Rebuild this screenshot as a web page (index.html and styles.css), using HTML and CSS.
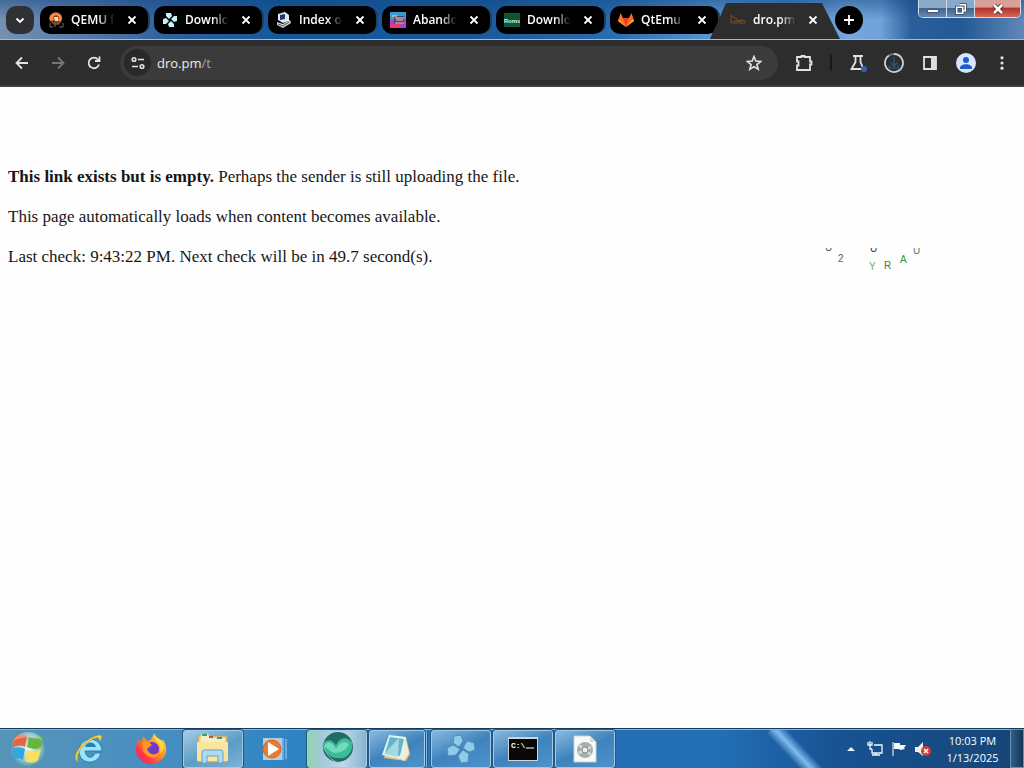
FILE: index.html
```html
<!DOCTYPE html>
<html lang="en">
<head>
<meta charset="utf-8">
<title>dro.pm</title>
<link rel="stylesheet" href="styles.css">
</head>
<body>
<header class="tabstrip">
  <button class="round search" aria-label="Search tabs"><svg width="12" height="12" viewBox="0 0 12 12"><path d="M2.500 4.500 6 8l3.500-3.500" fill="none" stroke="#fff" stroke-width="1.800"/></svg></button>
  <nav class="tabs" aria-label="Tabs">
    <div class="tab">
      <svg width="16" height="16" viewBox="0 0 16 16"><circle cx="8" cy="6.500" r="6.500" fill="#7b3a20"/><path d="M2 9C0 4 4 0 9 1c5 1 6 6 3 9l-2-2 1-3-3-2-3 2 1 3z" fill="#ef8d50"/><path d="M6 5h4v4H7z" fill="#ffd7a5"/><path d="M2 11v4h3m6 0h4v-4M7 11v4M10 10v3" fill="none" stroke="#777069"/></svg>
      <a href="#" class="title">QEMU f</a><button class="close" aria-label="Close QEMU"><svg width="10" height="10" viewBox="0 0 10 10"><path d="m1.500 1.500 7 7m0-7-7 7"/></svg></button>
    </div>
    <div class="tab">
      <svg width="16" height="16" viewBox="0 0 16 16"><g fill="#c7f1fb"><path d="M4 1h5l1 3-3 3-3-3z"/><path d="M15 4v5l-3 1-3-3 3-3z"/><path d="M12 15H7l-1-3 3-3 3 3z"/><path d="M1 12V7l3-1 3 3-3 3z"/></g></svg>
      <a href="#" class="title">Downlo</a><button class="close" aria-label="Close Downloads"><svg width="10" height="10" viewBox="0 0 10 10"><path d="m1.500 1.500 7 7m0-7-7 7"/></svg></button>
    </div>
    <div class="tab">
      <svg width="16" height="16" viewBox="0 0 16 16"><path d="m2 2 7-2 4 3v6l-6 2-5-3z" fill="#e6e7f0"/><path d="m4 3 5-1v5L4 8z" fill="#233574"/><path d="m1 10 6 2 7-4 1 3-8 5-6-3z" fill="#d4d5dc"/><path d="m2 12 5 2 6-4" fill="none" stroke="#555"/></svg>
      <a href="#" class="title">Index of</a><button class="close" aria-label="Close Index"><svg width="10" height="10" viewBox="0 0 10 10"><path d="m1.500 1.500 7 7m0-7-7 7"/></svg></button>
    </div>
    <div class="tab">
      <svg width="16" height="16" viewBox="0 0 16 16"><path d="M0 0h16v16H0z" fill="#3a9ad0"/><path d="M0 8h16v8H0z" fill="#b140c5"/><path d="M0 12h9v4H0z" fill="#ed367d"/><path d="M4 4h10v8H4z" fill="#493c92"/><path d="M2 4h5M5 6h9M6 8h7M5 11h9" stroke="#ffe278" stroke-width="1.200"/></svg>
      <a href="#" class="title">Abando</a><button class="close" aria-label="Close Abandonware"><svg width="10" height="10" viewBox="0 0 10 10"><path d="m1.500 1.500 7 7m0-7-7 7"/></svg></button>
    </div>
    <div class="tab">
      <svg width="16" height="16" viewBox="0 0 16 16"><path d="M0 1h16v14H0z" fill="#0c5636"/><text x="8" y="11" text-anchor="middle" class="roms">Roms</text></svg>
      <a href="#" class="title">Downlo</a><button class="close" aria-label="Close Downloads"><svg width="10" height="10" viewBox="0 0 10 10"><path d="m1.500 1.500 7 7m0-7-7 7"/></svg></button>
    </div>
    <div class="tab">
      <svg width="16" height="16" viewBox="0 0 16 16"><path d="M8 15 0 9l2.500-8L5 6h6l2.500-5L16 9z" fill="#fc6d26"/><path d="M8 15 5 6h6z" fill="#e24329"/><path d="M8 15 0 9l1-2z" fill="#fca326"/><path d="m8 15 8-6-1-2z" fill="#fca326"/></svg>
      <a href="#" class="title">QtEmu</a><button class="close" aria-label="Close QtEmu"><svg width="10" height="10" viewBox="0 0 10 10"><path d="m1.500 1.500 7 7m0-7-7 7"/></svg></button>
    </div>
    <div class="tab active">
      <svg width="16" height="16" viewBox="0 0 16 16"><path d="M1 3v8h14V9l-4-1-3 1-2-3H4L1 3M3 9h9" fill="none" stroke="#77532b"/></svg>
      <a href="#" class="title">dro.pm/</a><button class="close" aria-label="Close dro.pm"><svg width="10" height="10" viewBox="0 0 10 10"><path d="m1.500 1.500 7 7m0-7-7 7"/></svg></button>
    </div>
  </nav>
  <button class="round add" aria-label="New tab"><svg width="12" height="12" viewBox="0 0 12 12"><path d="M6 1v10M1 6h10" stroke="#fff" stroke-width="1.800"/></svg></button>
  <div class="window-controls">
    <button aria-label="Minimize"><svg width="14" height="12" viewBox="0 0 14 12"><path d="M1.500 6.500h11v3h-11z" fill="#fff" stroke="#49566b"/></svg></button>
    <button aria-label="Restore"><svg width="12" height="12" viewBox="0 0 14 14"><path d="M5 2h7v7M2 5h7v7H2z" fill="none" stroke="#39465b" stroke-width="3.500"/><path d="M5 2h7v7H9M2 5h7v7H2z" fill="none" stroke="#fff" stroke-width="1.800"/></svg></button>
    <button class="exit" aria-label="Close window"><svg width="14" height="12" viewBox="0 0 14 12"><path d="m3 2 8 8m0-8-8 8" stroke="#5a2a30" stroke-width="4.500"/><path d="m3 2 8 8m0-8-8 8" stroke="#fff" stroke-width="2.500"/></svg></button>
  </div>
</header>

<div class="toolbar">
  <button class="tool" aria-label="Back"><svg width="16" height="16" viewBox="0 0 16 16"><path d="M14 8H3m5-5.500L2.500 8 8 13.500"/></svg></button>
  <button class="tool dim" aria-label="Forward"><svg width="16" height="16" viewBox="0 0 16 16"><path d="M2 8h11M8 2.500 13.500 8 8 13.500"/></svg></button>
  <button class="tool" aria-label="Reload"><svg width="16" height="16" viewBox="0 0 16 16"><path d="M13 9.500A5.300 5.300 0 1 1 12 4.500l1.500 1.500M13.500 1.500V6H9"/></svg></button>
  <div class="omnibox">
    <button class="site" aria-label="Site information"><svg width="16" height="16" viewBox="0 0 16 16"><circle cx="4" cy="4.500" r="1.800"/><path d="M8 4.500h6M2 11.500h6"/><circle cx="12" cy="11.500" r="1.800"/></svg></button>
    <a class="url" href="#">dro.pm<span>/t</span></a>
    <button class="star" aria-label="Bookmark"><svg width="16" height="16" viewBox="0 0 16 16"><path d="m8 1.500 1.800 4.600 5 .3-3.900 3.100 1.300 4.800L8 11.600l-4.200 2.700 1.300-4.800-3.900-3.100 5-.3z"/></svg></button>
  </div>
  <button class="tool" aria-label="Extensions"><svg width="20" height="20" viewBox="0 0 20 20"><path d="M3 4h4.500V3h3v1H16v4.500h1.500v3H16V17H3v-4.500h1.500v-4H3z" stroke-width="1.800"/></svg></button>
  <i class="divider"></i>
  <button class="tool" aria-label="Experiments"><svg width="20" height="20" viewBox="0 0 20 20"><path d="M5 3h10M7.500 3v6L3.500 16h12l-3-7V3"/><circle cx="16" cy="16" r="3" fill="#3664ac" stroke="none"/></svg></button>
  <button class="tool" aria-label="Downloads"><svg width="20" height="20" viewBox="0 0 20 20"><path d="M10 1a9 9 0 1 1-5 1.500" stroke="#cfd2d6"/><path d="M5 2.500A9 9 0 0 1 10 1" stroke="#777"/><path d="M10 4v9M6.500 9.500 10 13l3.500-3.500M5.500 12v3h9v-3" stroke="#28527e" stroke-width="1.600"/></svg></button>
  <button class="tool" aria-label="Side panel"><svg width="16" height="16" viewBox="0 0 16 16"><path d="M2 2h12v12H2z"/><path d="M9 2h5v12H9z" fill="#dedede" stroke="none"/></svg></button>
  <button class="tool" aria-label="Profile"><svg width="20" height="20" viewBox="0 0 20 20"><circle cx="10" cy="10" r="10" fill="#d8e6fc" stroke="none"/><circle cx="10" cy="7" r="3" fill="#1b5fcd" stroke="none"/><path d="M4 15c0-5 12-5 12 0v1H4z" fill="#1b5fcd" stroke="none"/></svg></button>
  <button class="tool" aria-label="Menu"><svg width="16" height="16" viewBox="0 0 16 16"><g fill="#e2e2e2" stroke="none"><circle cx="8" cy="2.800" r="1.600"/><circle cx="8" cy="8" r="1.600"/><circle cx="8" cy="13.200" r="1.600"/></g></svg></button>
</div>

<main class="page">
  <p><b>This link exists but is empty.</b> Perhaps the sender is still uploading the file.</p>
  <p>This page automatically loads when content becomes available.</p>
  <div class="status">
    <p>Last check: 9:43:22 PM. Next check will be in 49.7 second(s).</p>
    <svg class="letters" width="104" height="24" viewBox="0 0 104 24"><text x="5" y="3" fill="#555">U</text><text x="18" y="14" fill="#3c6b55">2</text><text x="50" y="4" fill="#333">U</text><text x="49" y="22" fill="#6eae69">Y</text><text x="64" y="21" fill="#467b46">R</text><text x="80" y="15" fill="#2f9a35">A</text><text x="93" y="6" fill="#55795b">U</text></svg>
  </div>
</main>

<footer class="taskbar">
  <button class="start" aria-label="Start"><svg width="40" height="40" viewBox="0 0 40 40"><defs><radialGradient id="orb"><stop offset="0" stop-color="#f1fbe9"/><stop offset=".7" stop-color="#8fc4c9"/><stop offset="1" stop-color="#4b93ae"/></radialGradient></defs><circle cx="20" cy="20" r="18" fill="url(#orb)"/><path d="M7 8c4-4 8-3 12-1l-2 11c-4-2-9-2-13 1z" fill="#e8633e"/><path d="M21 8c4 2 9 2 14-1l-2 11c-4 3-9 2-14 0z" fill="#65b63d"/><path d="M4 20c4-2 9-2 13 0l-2 11c-4-2-7-2-9-1z" fill="#36a6e3"/><path d="M19 21c4 2 9 2 14-1l-3 11c-4 4-9 3-13 1z" fill="#f7df62"/><path d="M5 12C12 0 29 0 35 12c-9-5-20-5-30 0" fill="#fff" opacity=".3"/></svg></button>
  <div class="apps">
    <button class="app" aria-label="Internet Explorer"><svg width="32" height="32" viewBox="0 0 32 32"><path d="M28 20C24 34 5 31 6 17 7 3 28 2 29 18H12c1 8 8 8 10 2z" fill="#9be4fa" stroke="#2280bc"/><path d="M12 14c1-6 10-6 11 0z" fill="#287fbd"/><path d="M5 29C-3 25 9 6 26 2c4 0 3 4 0 7 1-3 0-5-3-4C12 8 2 20 5 29z" fill="#ffd43d" stroke="#b6942d" stroke-width=".5"/></svg></button>
    <button class="app" aria-label="Firefox"><svg width="32" height="32" viewBox="0 0 32 32"><defs><linearGradient id="fox" x1="1" y1="0" x2="0" y2="1"><stop stop-color="#fff44f"/><stop offset=".45" stop-color="#ff8b20"/><stop offset=".75" stop-color="#fc334c"/><stop offset="1" stop-color="#df269b"/></linearGradient></defs><path d="M19 0c1 4 5 5 7 8l2-1c8 11 0 24-12 24C2 31-3 17 4 6l2 3 2-5c2 0 2 3 5 4 3-1 5-4 6-8" fill="url(#fox)"/><circle cx="17" cy="16" r="7" fill="#7139c9"/><path d="M7 10c6-3 8 0 10 2l-5 4c2 6 8 7 12 3-2 10-18 6-17-9" fill="#ff9828"/><path d="M19 0c0 5 2 8 5 11 2 4 2 8 1 10 5-5 4-11 1-14-3-2-6-3-7-7" fill="#ffdb43"/></svg></button>
    <button class="app open" aria-label="File Explorer"><svg width="34" height="32" viewBox="0 0 34 32"><path d="M2 3h29v26H2z" fill="#e8cf7c" stroke="#bba15a"/><path d="M5 1h7l2 4h15v8H4z" fill="#f5edc7"/><path d="M6 2h5M21 5h5" stroke="#3f9b65" stroke-width="2"/><path d="M13 4h4" stroke="#c24f43" stroke-width="2"/><path d="M1 9h31v19H1z" fill="#f8e49d"/><path d="M6 30V19q0-2 2-2h17q2 0 2 2v11h-5v-7H11v7z" fill="#a9dcf2" stroke="#6e9dba"/></svg></button>
    <button class="app" aria-label="Media Player"><svg width="28" height="26" viewBox="0 0 28 26"><path d="M2 2h19v22H2z" fill="#b6ccdc"/><path d="M22 2v22M25 3v20" stroke="#afd1e9"/><circle cx="11" cy="13" r="9" fill="#ed792d" stroke="#d66322"/><path d="m7 6 11 7-11 7z" fill="#fff"/></svg></button>
    <button class="app open current" aria-label="Browser"><svg width="34" height="34" viewBox="0 0 34 34"><circle cx="18" cy="15" r="15" fill="#216d63"/><path d="M2 14c3-7 9-8 14-1 4-8 10-9 16-3 2 10-6 18-13 16-7 1-12-4-17-12" fill="#3dbb99"/><path d="M4 14c4-6 8-4 12 3 4-7 8-9 13-5-3 7-8 8-12 9-7 0-8-4-13-7" fill="#72dbbb"/><path d="M4 15c3 9 8 13 14 16" fill="none" stroke="#82c9b8"/></svg></button>
    <button class="app open stacked" aria-label="Notepad"><svg width="32" height="30" viewBox="0 0 32 30"><path d="m9 2 16 1 4 17-4 7-22-3z" fill="#dfc879"/><path d="m24 3 4 16-5 8-4-3z" fill="#f0ecd8"/><path d="m8 1 17 2-5 22-19-4z" fill="#e1f4ef"/><path d="m9 3 14 2-4 17-15-3z" fill="#63b4cf"/><path d="M18 4 3 20l14 3z" fill="#a4d9e2"/></svg></button>
    <button class="app open" aria-label="PPSSPP"><svg width="30" height="30" viewBox="0 0 30 30"><g fill="#92cbea" stroke="#4a91bd"><path d="m8 2 7-1 2 6-4 6-6-4z"/><path d="m21 7 7 2 1 7-6 2-6-4z"/><path d="m17 16 6 4-1 8-7 1-3-7z"/><path d="m1 14 6-3 7 4-4 6-8 1z"/></g></svg></button>
    <button class="app open" aria-label="Command Prompt"><svg width="30" height="24" viewBox="0 0 30 24"><path d="M0 0h30v24H0z" fill="#d1d4d5"/><path d="M1 2h28v21H1z" fill="#080808"/><text class="prompt" x="3" y="11">C:\</text><path d="M18 11h8" stroke="#fff"/></svg></button>
    <button class="app open" aria-label="Disc image"><svg width="24" height="28" viewBox="0 0 24 28"><path d="M1 1h16l6 6v20H1z" fill="#f8faf8" stroke="#c6d2d7"/><path d="M17 1v6h6" fill="#d7dedc"/><circle cx="12" cy="15" r="8" fill="#a7b0ae"/><path d="m6 10 12 10M6 18l12-6" stroke="#dbe1df" stroke-width="2"/><circle cx="12" cy="15" r="3" fill="#edf0ee" stroke="#7c8784"/></svg></button>
  </div>
  <div class="tray">
    <button aria-label="Show hidden icons"><svg width="8" height="4" viewBox="0 0 8 4"><path d="M0 4h8L4 0z" fill="#e8f5ff"/></svg></button>
    <button aria-label="Network"><svg width="16" height="16" viewBox="0 0 16 16"><path d="M7 4h8v8H5V8M5 14h8M9 12v2M1 1v3h4V1M3 0v8h2" fill="none" stroke="#f3f7fb" stroke-width="1.300"/></svg></button>
    <button aria-label="Action Center"><svg width="16" height="16" viewBox="0 0 16 16"><path d="M2 1v14" stroke="#fff"/><path d="M3 2h6v2h6l-2 3 1 1-5 1-1-1H3z" fill="#f5f9fc"/></svg></button>
    <button aria-label="Volume muted"><svg width="18" height="16" viewBox="0 0 18 16"><path d="M1 6h3l5-5v14l-5-4H1z" fill="#e9eef2"/><circle cx="12" cy="10" r="5" fill="#d63b33"/><path d="m10 8 4 4m0-4-4 4" stroke="#fff" stroke-width="1.500"/></svg></button>
  </div>
  <time class="clock">10:03 PM<br>1/13/2025</time>
  <button class="desktop" aria-label="Show desktop"></button>
</footer>
</body>
</html>
```

FILE: styles.css
```css
* { box-sizing: border-box; }
body { margin: 0; min-height: 100vh; display: flex; flex-direction: column; background: #fefefe; font-family: "Open Sans", "Noto Sans", sans-serif; }
button { display: flex; align-items: center; justify-content: center; margin: 0; padding: 0; border: 0; background: none; flex-shrink: 0; }
a { color: inherit; text-decoration: none; }
svg { display: block; flex-shrink: 0; }

.tabstrip { height: 40px; display: flex; align-items: center; padding-left: 6px; border-bottom: 1px solid #a9b8cb; background: linear-gradient(rgb(20 70 130 / 50%), transparent 50%), linear-gradient(90deg, #7590b2 0, #4d76a6 10%, #2b5f9f 17%, #11589c 28%, #18589a 46%, #286cb1 60%, #5a97d4 70%, #4c88c5 77%, #75a6dc 83%, #6fa2d8 86%, #2b5f9c 89%, #245995 94%, #5f88b8 100%); }
.round { width: 28px; height: 28px; border-radius: 10px; background: #000; }
.search { background: #303134; }
.add { border-radius: 50%; margin-left: -5px; }
.tabs { display: flex; align-items: center; gap: 6px; height: 39px; margin-left: 6px; }
.tab { width: 108px; height: 28px; padding: 0 10px 0 8px; display: flex; align-items: center; border-radius: 10px; background: #000; color: #fff; box-shadow: 3px 0 0 -1px #253e5c; }
.title { flex: 1; min-width: 0; margin: 0 9px 0 7px; overflow: hidden; white-space: nowrap; font-size: 12px; font-weight: 600; line-height: 20px; mask-image: linear-gradient(90deg, #000 60%, transparent 95%); }
.close { width: 12px; height: 20px; }
.close svg { fill: none; stroke: #fff; stroke-width: 1.8px; }
.active { width: 130px; height: 36px; margin: 0 0 0 -14px; align-self: flex-end; padding: 0 21px 2px 20px; border-radius: 0; box-shadow: none; background: #2d2d2d; clip-path: polygon(16px 0, 112px 0, 100% 100%, 0 100%); }
.roms { font: bold 6px "Liberation Sans", sans-serif; fill: #dcf2df; }
.window-controls { align-self: flex-start; display: flex; margin-left: auto; margin-right: 3px; height: 18px; border: 1px solid #d2deec; border-top: 0; border-radius: 0 0 5px 5px; overflow: hidden; }
.window-controls button { width: 28px; border-right: 1px solid #d2deec; background: linear-gradient(#8ca8c9 0 45%, #41658f 50%, #6688b0); }
.window-controls .exit { width: 45px; border-right: 0; background: linear-gradient(#d9a09a 0 40%, #b5342a 50%, #d26a56); }

.toolbar { height: 47px; padding: 0 4px; display: flex; align-items: center; background: #2d2d2d; border-bottom: 2px solid #3f3f3f; }
.tool { width: 36px; height: 34px; }
.tool svg { fill: none; stroke: #e2e2e2; stroke-width: 1.8px; }
.dim { opacity: .4; }
.omnibox { flex: 1; height: 34px; margin: 0 8px; padding: 0 12px 0 4px; display: flex; align-items: center; border-radius: 17px; background: #3b3b3b; }
.site { width: 27px; height: 27px; border-radius: 50%; background: #292929; }
.site svg, .star svg { fill: none; stroke: #e2e2e2; stroke-width: 1.6px; }
.url { flex: 1; margin-left: 6px; font-size: 13px; line-height: 20px; color: #ececec; }
.url span { color: #a5a5a5; }
.star { width: 24px; height: 24px; }
.divider { width: 2px; height: 16px; margin: 0 8px; background: #181818; }

.page { flex: 1; padding: 80px 100px 0 8px; font: 17px/20px "Liberation Serif", serif; color: #161616; }
.page p { margin: 0 0 20px; }
.status { display: flex; justify-content: space-between; }
.letters { overflow: hidden; margin-top: 1px; font: 10px "Liberation Sans", sans-serif; }

.taskbar { height: 40px; display: flex; border-top: 1px solid #153b5c; box-shadow: inset 0 1px #8ab6d6; background: linear-gradient(90deg, #5794b9 0, #478fc0 15%, #2c83c4 30%, #236eb2 55%, #236fb6 70%, #175292 82%, #164576 100%); position: relative; overflow: hidden; }
.taskbar::before { content: ""; position: absolute; right: 220px; top: -10px; width: 18px; height: 64px; background: linear-gradient(90deg, transparent, #80bbed, transparent); transform: rotate(-43deg); }
.start { width: 56px; }
.apps { display: flex; padding: 1px 0 0 3px; }
.app { width: 60px; height: 38px; margin-right: 2px; border-radius: 3px; }
.open { border: 1px solid #a2cae5; box-shadow: 0 0 0 1px #24587f; background: linear-gradient(155deg, #88b9df, #3f83bd 50%, #4e93ca); }
.open[aria-label="File Explorer"] { background: linear-gradient(155deg, #a5cbe2, #5b9cc6 55%, #7bb3d6); }
.current { background: linear-gradient(90deg, #8ed6ad, #a4c8dc 25%, #c0d8e8 60%, #87b4d1); }
.stacked { width: 56px; margin-right: 6px; box-shadow: 0 0 0 1px #24587f, 2px 0 0 #8bbce0, 4px 0 0 -1px #24587f; }
.prompt { font: bold 8px "Liberation Mono", monospace; fill: #fff; }
.tray { display: flex; align-items: center; margin-left: auto; }
.tray button { width: 24px; height: 36px; }
.clock { width: 75px; align-self: center; text-align: center; color: #fff; font-family: "Open Sans", sans-serif; font-size: 11px; line-height: 17px; white-space: nowrap; }
.desktop { width: 14px; border: 1px solid #6b91b4; background: linear-gradient(90deg, #315d86, #143654); }
```
